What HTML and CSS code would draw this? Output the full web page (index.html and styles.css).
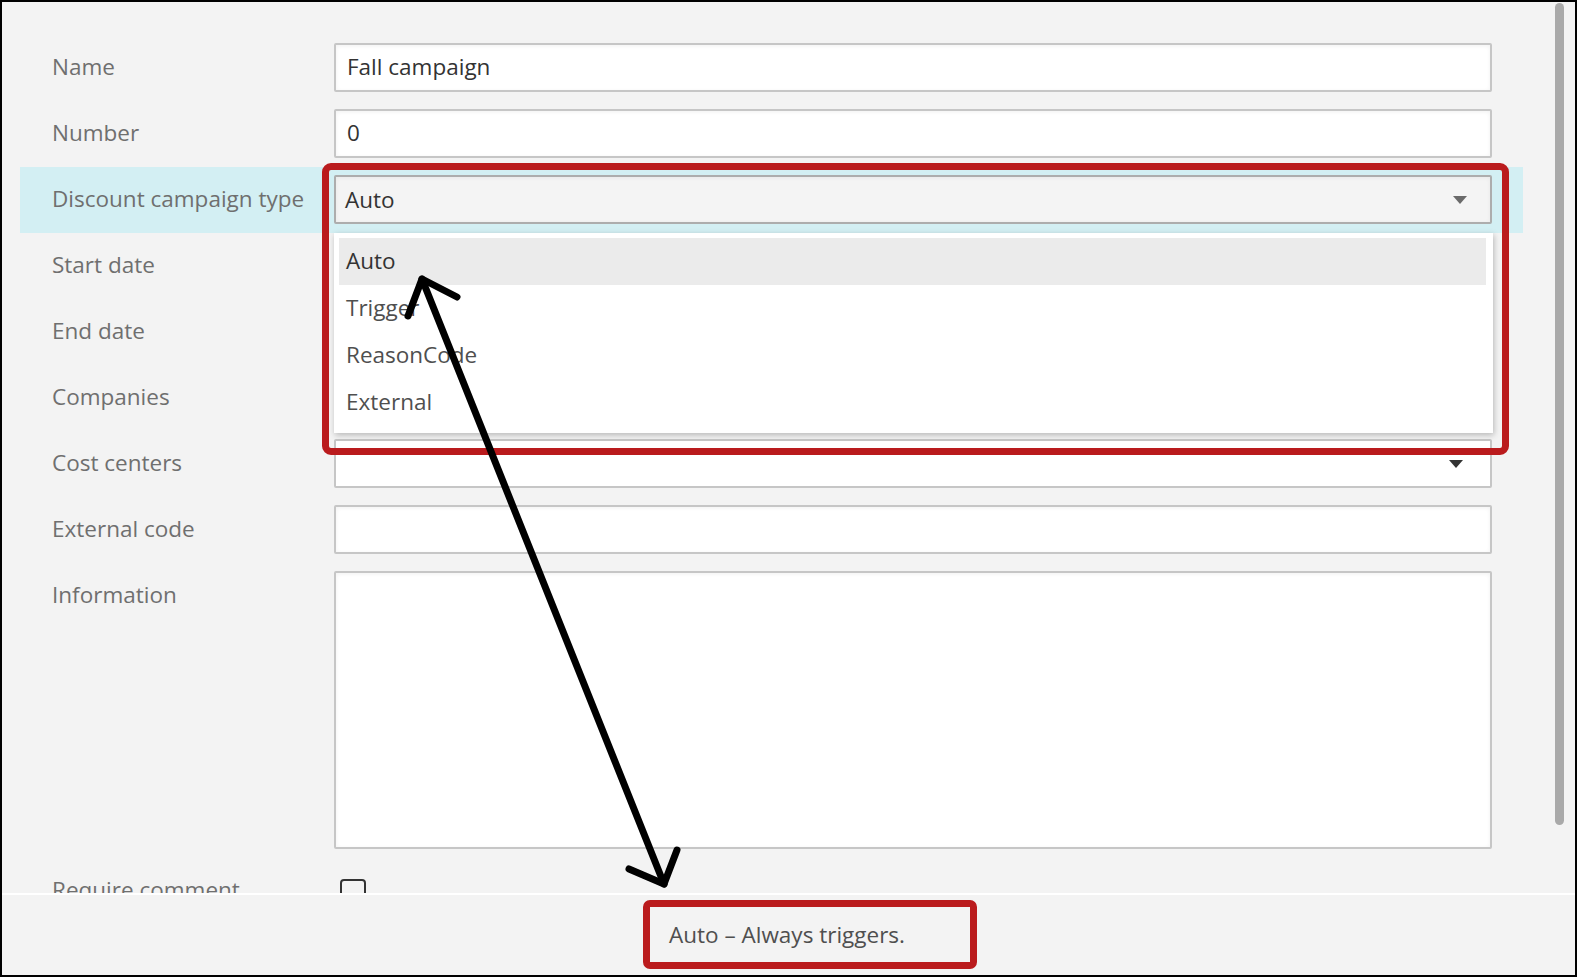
FILE: index.html
```html
<!DOCTYPE html>
<html lang="en">
<head>
    <meta charset="UTF-8">
    <meta name="viewport" content="width=device-width, initial-scale=1.0">
    <title>Discount campaign</title>
    <link rel="stylesheet" href="styles.css">
</head>
<body>
    <div class="window">
        <div class="content">
            <div class="form">
                <div class="row">
                    <div class="label">Name</div>
                    <div class="field"><div class="input">Fall campaign</div></div>
                </div>
                <div class="row">
                    <div class="label">Number</div>
                    <div class="field"><div class="input">0</div></div>
                </div>
                <div class="row active">
                    <div class="label">Discount campaign type</div>
                    <div class="field">
                        <div class="select open">
                            <span>Auto</span>
                            <span class="caret"></span>
                            <div class="popup">
                                <div class="option selected">Auto</div>
                                <div class="option">Trigger</div>
                                <div class="option">ReasonCode</div>
                                <div class="option">External</div>
                            </div>
                            <div class="callout"></div>
                        </div>
                    </div>
                </div>
                <div class="row">
                    <div class="label">Start date</div>
                    <div class="field"><div class="input"></div></div>
                </div>
                <div class="row">
                    <div class="label">End date</div>
                    <div class="field"><div class="input"></div></div>
                </div>
                <div class="row">
                    <div class="label">Companies</div>
                    <div class="field"><div class="input"></div></div>
                </div>
                <div class="row">
                    <div class="label">Cost centers</div>
                    <div class="field">
                        <div class="select plain">
                            <span></span>
                            <span class="caret dark"></span>
                        </div>
                    </div>
                </div>
                <div class="row">
                    <div class="label">External code</div>
                    <div class="field"><div class="input"></div></div>
                </div>
                <div class="row">
                    <div class="label">Information</div>
                    <div class="field"><div class="input textarea"></div></div>
                </div>
                <div class="row">
                    <div class="label">Require comment</div>
                    <div class="field"><div class="checkbox"></div></div>
                </div>
            </div>
            <div class="scrollbar"><div class="thumb"></div></div>
        </div>

        <div class="footer">
            <span class="status">Auto – Always triggers.</span>
        </div>

        <svg class="arrow" width="1577" height="977" viewBox="0 0 1577 977">
            <g fill="none" stroke="#000" stroke-width="7" stroke-linecap="round" stroke-linejoin="round">
                <path d="M422 279 L664 884"/>
                <path d="M408 316 L422 279 L457 297"/>
                <path d="M629 869 L664 884 L677 850"/>
            </g>
        </svg>
    </div>
</body>
</html>
```

FILE: styles.css
```css
body {
    margin: 0;
    padding: 0;
    font-family: "Open Sans", "Noto Sans", sans-serif;
    background-color: #f3f3f3;
}

.window {
    position: relative;
    width: 1577px;
    height: 977px;
    box-sizing: border-box;
    border: 2px solid #000;
    background-color: #f3f3f3;
    overflow: hidden;
}

.content {
    display: flex;
    height: 891px;
    overflow: hidden;
}

.form {
    width: 1503px;
    margin-left: 18px;
    padding-top: 33px;
}

.row {
    display: flex;
}

.row.active {
    background-color: #d3eff3;
}

.label {
    width: 314px;
    box-sizing: border-box;
    padding: 17px 0 0 32px;
    font-size: 22.5px;
    line-height: 30px;
    color: #6f6f6f;
}

.field {
    flex: 1;
    padding: 8px 31px 9px 0;
}

.input {
    height: 49px;
    box-sizing: border-box;
    border: 2px solid #c6c6c6;
    border-radius: 2px;
    background-color: #fff;
    box-shadow: inset 0 1px 4px rgba(0, 0, 0, 0.06);
    padding-left: 11px;
    font-size: 22.5px;
    line-height: 43px;
    color: #333;
}

.textarea {
    height: 278px;
}

.select {
    position: relative;
    display: flex;
    align-items: center;
    justify-content: space-between;
    height: 49px;
    box-sizing: border-box;
    border: 2px solid #c6c6c6;
    border-radius: 2px;
    background-color: #fff;
    padding: 0 23px 0 9px;
    font-size: 22.5px;
    color: #333;
}

.select.open {
    background-color: #f4f4f4;
    border-color: #adadad;
    box-shadow: inset 0 1px 4px rgba(0, 0, 0, 0.05);
}

.caret {
    width: 0;
    height: 0;
    border-left: 7px solid transparent;
    border-right: 7px solid transparent;
    border-top: 8px solid #6a6a6a;
}

.caret.dark {
    border-top-color: #333;
    margin-right: 4px;
}

.popup {
    position: absolute;
    top: 56px;
    left: -2px;
    right: -3px;
    height: 200px;
    box-sizing: border-box;
    padding: 5px 7px 0 5px;
    background-color: #fff;
    box-shadow: 1px 2px 6px rgba(0, 0, 0, 0.25);
    z-index: 2;
}

.option {
    height: 47px;
    padding-left: 7px;
    line-height: 46px;
    font-size: 22.5px;
    color: #4f4f4f;
}

.option.selected {
    background-color: #ebebeb;
    color: #333;
}

.callout {
    position: absolute;
    top: -14px;
    left: -14px;
    width: 1187px;
    height: 292px;
    box-sizing: border-box;
    border: 7px solid #ba1b1d;
    border-radius: 9px;
    z-index: 3;
}

.checkbox {
    width: 26px;
    height: 26px;
    box-sizing: border-box;
    margin: 13px 0 0 6px;
    border: 2px solid #333;
    border-radius: 4px;
}

.scrollbar {
    margin-left: 32px;
    padding-top: 1px;
}

.thumb {
    width: 9px;
    height: 822px;
    border-radius: 5px;
    background-color: #a9a9a9;
}

.footer {
    height: 80px;
    box-sizing: border-box;
    border-top: 2px solid #fff;
    padding: 5px 0 0 641px;
}

.status {
    display: inline-block;
    width: 334px;
    height: 69px;
    box-sizing: border-box;
    border: 7px solid #ba1b1d;
    border-radius: 7px;
    padding-left: 19px;
    font-size: 22.5px;
    line-height: 55px;
    color: #4f4f4f;
}

.arrow {
    position: absolute;
    top: -2px;
    left: -2px;
    pointer-events: none;
    z-index: 5;
}
```
